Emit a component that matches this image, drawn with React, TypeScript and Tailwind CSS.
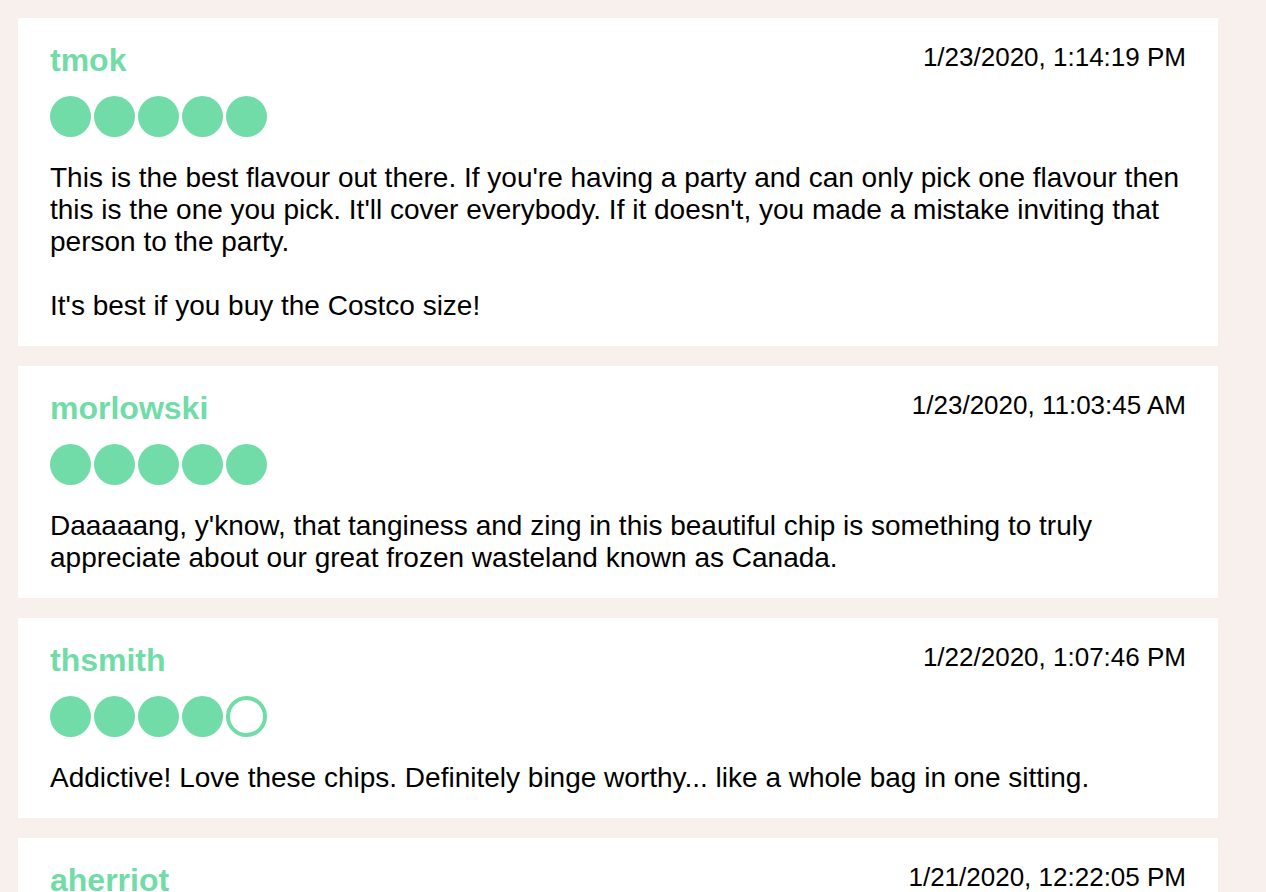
import React from 'react'

interface Review {
  user: string
  date: string
  rating: number
  text: string
}

const reviews: Review[] = [
  {
    user: 'tmok',
    date: '1/23/2020, 1:14:19 PM',
    rating: 5,
    text: "This is the best flavour out there. If you're having a party and can only pick one flavour then this is the one you pick. It'll cover everybody. If it doesn't, you made a mistake inviting that person to the party.\n\nIt's best if you buy the Costco size!"
  },
  {
    user: 'morlowski',
    date: '1/23/2020, 11:03:45 AM',
    rating: 5,
    text: "Daaaaang, y'know, that tanginess and zing in this beautiful chip is something to truly appreciate about our great frozen wasteland known as Canada."
  },
  {
    user: 'thsmith',
    date: '1/22/2020, 1:07:46 PM',
    rating: 4,
    text: 'Addictive! Love these chips. Definitely binge worthy... like a whole bag in one sitting.'
  },
  {
    user: 'aherriot',
    date: '1/21/2020, 12:22:05 PM',
    rating: 5,
    text: 'So good. These are the best chips.'
  }
]

function Rating({ value }: { value: number }) {
  return (
    <div className="flex gap-[3px]">
      {[1, 2, 3, 4, 5].map((i) =>
        i <= value ? (
          <span key={i} className="block w-[41px] h-[41px] rounded-full bg-[#71dca8]" />
        ) : (
          <span key={i} className="block w-[41px] h-[41px] rounded-full border-[4px] border-[#71dca8] bg-white" />
        )
      )}
    </div>
  )
}

export default function App() {
  return (
    <div
      className="min-h-screen bg-[#f8f0ed] p-[18px] text-black"
      style={{ fontFamily: '"Liberation Sans", Arial, Helvetica, sans-serif' }}
    >
      <div className="w-[1200px] flex flex-col gap-[20px]">
        {reviews.map((r) => (
          <div key={r.user} className="bg-white px-[32px] pt-[24px] pb-[24px]">
            {/* header: name + timestamp */}
            <div className="flex justify-between items-start">
              <div className="text-[32px] font-bold text-[#71dca8] leading-[36px]">{r.user}</div>
              <div className="text-[26px] leading-[30px]">{r.date}</div>
            </div>
            <div className="mt-[18px]">
              <Rating value={r.rating} />
            </div>
            <p className="mt-[25px] text-[28px] leading-[32px] whitespace-pre-line">{r.text}</p>
          </div>
        ))}
      </div>
    </div>
  )
}
